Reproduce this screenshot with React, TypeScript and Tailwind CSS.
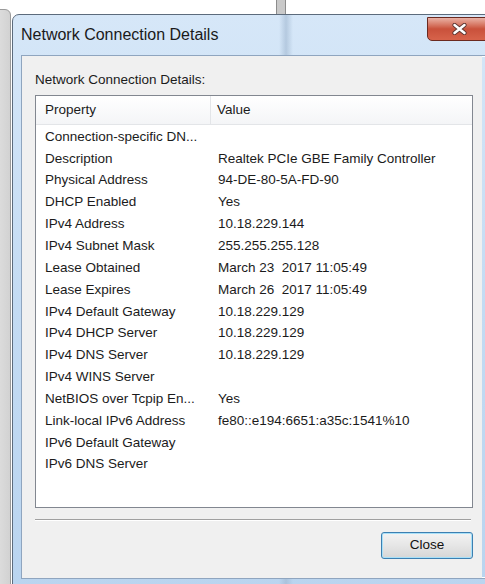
import React from 'react';

const rows: [string, string][] = [
  ['Connection-specific DN...', ''],
  ['Description', 'Realtek PCIe GBE Family Controller'],
  ['Physical Address', '94-DE-80-5A-FD-90'],
  ['DHCP Enabled', 'Yes'],
  ['IPv4 Address', '10.18.229.144'],
  ['IPv4 Subnet Mask', '255.255.255.128'],
  ['Lease Obtained', 'March 23  2017 11:05:49'],
  ['Lease Expires', 'March 26  2017 11:05:49'],
  ['IPv4 Default Gateway', '10.18.229.129'],
  ['IPv4 DHCP Server', '10.18.229.129'],
  ['IPv4 DNS Server', '10.18.229.129'],
  ['IPv4 WINS Server', ''],
  ['NetBIOS over Tcpip En...', 'Yes'],
  ['Link-local IPv6 Address', 'fe80::e194:6651:a35c:1541%10'],
  ['IPv6 Default Gateway', ''],
  ['IPv6 DNS Server', ''],
];

const font = { fontFamily: '"Liberation Sans", Arial, sans-serif' };

function CloseX() {
  return (
    <div className="flex h-[24px] w-[64px] items-center justify-center rounded-bl-[5px] border border-[#6b2a20] bg-gradient-to-b from-[#e8b1a5] via-[#c9513b] to-[#d7634b]">
      <svg width="15" height="12" viewBox="0 0 15 12">
        <path d="M2.5 2 L12.5 10 M12.5 2 L2.5 10" stroke="#5a3430" strokeWidth="4.2" strokeLinecap="round" />
        <path d="M2.5 2 L12.5 10 M12.5 2 L2.5 10" stroke="#ffffff" strokeWidth="2.5" strokeLinecap="round" />
      </svg>
    </div>
  );
}

export default function App() {
  return (
    <div className="relative h-[584px] w-[485px] overflow-hidden bg-white text-[#1b1b1b]" style={font}>
      {/* window behind, left edge */}
      <div className="absolute left-[-10px] top-[9px] h-[600px] w-[21px] rounded-tr-[6px] border border-[#9a9a9a] bg-gradient-to-r from-[#e4e4e4] to-[#d2d2d2]" />
      {/* window behind, top edge */}
      <div className="absolute left-[276px] top-0 h-[16px] w-[10px] border-x border-[#8c8c8c] bg-[#c9c9c9]" />

      {/* dialog frame */}
      <div className="absolute left-[12px] top-[14px] flex h-[590px] w-[490px] flex-col rounded-tl-[7px] border border-[#5c6b7c] bg-gradient-to-b from-[#d6e7f8] via-[#c3dbf3] to-[#b9d4ef] pl-[8px]">
        <div className="pointer-events-none absolute left-[266px] top-0 h-full w-[14px] bg-gradient-to-r from-transparent via-[#9fb6cf]/60 to-transparent" />
        <div className="relative flex h-[40px] items-start">
          <span className="pt-[10px] text-[16px] leading-[20px] text-[#1a1a1a]">Network Connection Details</span>
          <div className="absolute left-[406px] top-[2px]">
            <CloseX />
          </div>
        </div>

        <div className="relative border border-[#8fa5bf] shadow-[inset_0_0_0_1px_#ffffff]">
          <div className="flex h-[522px] w-[460px] flex-col bg-[#f0f0f0] pl-[13px] pt-[16px]">
            <div className="text-[13.5px] leading-[16px]">Network Connection Details:</div>

            <div className="mt-[7px] h-[413px] w-[438px] border border-[#828790] bg-white">
              <div className="flex h-[29px] border-b border-[#e3e5e8] bg-gradient-to-b from-white to-[#f4f5f7] text-[13.5px]">
                <div className="flex w-[175px] items-center border-r border-[#e3e5e8] pl-[9px]">Property</div>
                <div className="flex items-center pl-[6px]">Value</div>
              </div>
              <div className="pt-[1px]">
                {rows.map(([k, v]) => (
                  <div key={k} className="flex h-[21.85px] items-center text-[13.5px]">
                    <div className="w-[176px] pl-[9px] whitespace-nowrap">{k}</div>
                    <div className="pl-[6px] whitespace-pre">{v}</div>
                  </div>
                ))}
              </div>
            </div>

            <div className="mt-[11px] h-[2px] w-[436px] border-t border-[#a0a0a0] bg-white" />

            <div className="mt-[11px] flex w-[438px] justify-end">
              <button className="h-[27px] w-[92px] rounded-[3px] border border-[#3c7fb1] bg-gradient-to-b from-[#f3f3f3] via-[#e6e6e6] to-[#d6d6d6] text-[13.5px] text-[#111] shadow-[inset_0_0_0_1px_#a8e0f8]">
                Close
              </button>
            </div>
          </div>
        </div>
      </div>
    </div>
  );
}
